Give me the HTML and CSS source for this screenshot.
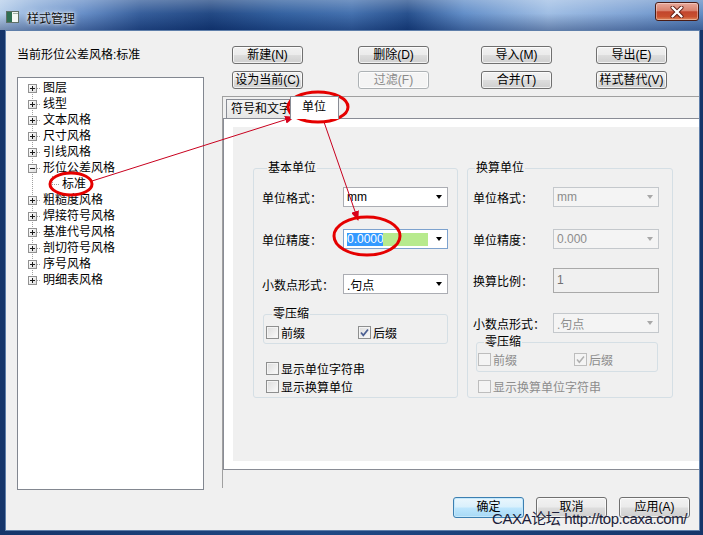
FILE: index.html
```html
<!DOCTYPE html>
<html lang="zh-CN">
<head>
    <meta charset="UTF-8">
    <title>样式管理</title>
    <link rel="stylesheet" href="styles.css">
</head>
<body>
<div class="window">
    <div class="titlebar">
        <svg class="app-icon" width="13" height="12" viewBox="0 0 13 12">
            <rect x="0.5" y="0.5" width="12" height="11" fill="#f4f7f4" stroke="#5f6f66"/>
            <rect x="1" y="1" width="5" height="10" fill="#2f6f52"/>
            <rect x="7" y="2" width="5" height="1" fill="#9fb0a6"/>
        </svg>
        <span class="title">样式管理</span>
        <button class="close" type="button">
            <svg width="14" height="12" viewBox="0 0 14 12">
                <path d="M2.5 1.5 L11.5 10.5 M11.5 1.5 L2.5 10.5" stroke="#5a1a10" stroke-width="4" stroke-linecap="round"/>
                <path d="M2.5 1.5 L11.5 10.5 M11.5 1.5 L2.5 10.5" stroke="#fff" stroke-width="2.4" stroke-linecap="round"/>
            </svg>
        </button>
    </div>

    <div class="client">
        <div class="main">
            <div class="left">
                <div class="current">当前形位公差风格:标准</div>
                <ul class="tree">
                    <li><span class="pm plus"></span><span class="dash"></span>图层</li>
                    <li><span class="pm plus"></span><span class="dash"></span>线型</li>
                    <li><span class="pm plus"></span><span class="dash"></span>文本风格</li>
                    <li><span class="pm plus"></span><span class="dash"></span>尺寸风格</li>
                    <li><span class="pm plus"></span><span class="dash"></span>引线风格</li>
                    <li><span class="pm"></span><span class="dash"></span>形位公差风格</li>
                    <li class="child"><span class="dash"></span>标准</li>
                    <li><span class="pm plus"></span><span class="dash"></span>粗糙度风格</li>
                    <li><span class="pm plus"></span><span class="dash"></span>焊接符号风格</li>
                    <li><span class="pm plus"></span><span class="dash"></span>基准代号风格</li>
                    <li><span class="pm plus"></span><span class="dash"></span>剖切符号风格</li>
                    <li><span class="pm plus"></span><span class="dash"></span>序号风格</li>
                    <li><span class="pm plus"></span><span class="dash"></span>明细表风格</li>
                </ul>
            </div>

            <div class="right">
                <div class="toolbar">
                    <button class="btn" type="button">新建(N)</button>
                    <button class="btn" type="button">删除(D)</button>
                    <button class="btn" type="button">导入(M)</button>
                    <button class="btn" type="button">导出(E)</button>
                    <button class="btn" type="button">设为当前(C)</button>
                    <button class="btn" type="button" disabled>过滤(F)</button>
                    <button class="btn" type="button">合并(T)</button>
                    <button class="btn" type="button">样式替代(V)</button>
                </div>

                <div class="frame">
                    <div class="tabs">
                        <div class="tab">符号和文字</div>
                        <div class="tab on">单位</div>
                    </div>
                    <div class="panel">
                        <div class="page">
                            <fieldset class="group basic">
                                <legend>基本单位</legend>
                                <div class="row r1"><label>单位格式：</label><div class="combo">mm</div></div>
                                <div class="row r2"><label>单位精度：</label><div class="combo focus"><span class="sel">0.0000</span><span class="hl"></span></div></div>
                                <div class="row r3"><label>小数点形式：</label><div class="combo">.句点</div></div>
                                <fieldset class="sub">
                                    <legend>零压缩</legend>
                                    <div class="cbrow">
                                        <span class="check"><span class="cb"></span>前缀</span>
                                        <span class="check"><span class="cb"><svg width="11" height="11" viewBox="0 0 11 11"><path d="M2 5.5 L4.3 8.3 L9 2.5" fill="none" stroke="#4b5f92" stroke-width="1.7"/></svg></span>后缀</span>
                                    </div>
                                </fieldset>
                                <div class="cbrow solo first"><span class="check"><span class="cb"></span>显示单位字符串</span></div>
                                <div class="cbrow solo"><span class="check"><span class="cb"></span>显示换算单位</span></div>
                            </fieldset>

                            <fieldset class="group alt">
                                <legend>换算单位</legend>
                                <div class="row r1"><label>单位格式：</label><div class="combo off">mm</div></div>
                                <div class="row r2"><label>单位精度：</label><div class="combo off">0.000</div></div>
                                <div class="row r3"><label>换算比例：</label><div class="textbox">1</div></div>
                                <div class="row r4"><label>小数点形式：</label><div class="combo off">.句点</div></div>
                                <fieldset class="sub">
                                    <legend>零压缩</legend>
                                    <div class="cbrow off">
                                        <span class="check"><span class="cb"></span>前缀</span>
                                        <span class="check"><span class="cb"><svg width="11" height="11" viewBox="0 0 11 11"><path d="M2 5.5 L4.3 8.3 L9 2.5" fill="none" stroke="#b0b0b0" stroke-width="1.5"/></svg></span>后缀</span>
                                    </div>
                                </fieldset>
                                <div class="cbrow solo off"><span class="check"><span class="cb"></span>显示换算单位字符串</span></div>
                            </fieldset>
                        </div>
                    </div>
                </div>
            </div>
        </div>

        <div class="actions">
            <button class="btn big default" type="button">确定</button>
            <button class="btn big" type="button">取消</button>
            <button class="btn big" type="button">应用(A)</button>
        </div>
    </div>

    <!-- red marks drawn on top of the screenshot -->
    <svg class="marks" width="703" height="535" viewBox="0 0 703 535">
        <defs>
            <marker id="arrow" markerWidth="10" markerHeight="8" refX="9" refY="4" orient="auto" markerUnits="userSpaceOnUse">
                <path d="M0 0 L10 4 L0 8 Z" fill="#d8001a"/>
            </marker>
        </defs>
        <line x1="92" y1="181" x2="294" y2="117" stroke="#c8001e" stroke-width="1" marker-end="url(#arrow)"/>
        <line x1="324" y1="122" x2="358" y2="220" stroke="#c8001e" stroke-width="1" marker-end="url(#arrow)"/>
        <ellipse cx="318" cy="107" rx="30" ry="15" fill="none" stroke="#e50000" stroke-width="3"/>
        <ellipse cx="71" cy="184" rx="21" ry="11" fill="none" stroke="#e50000" stroke-width="3"/>
        <ellipse cx="367" cy="236" rx="33" ry="19" fill="none" stroke="#e50000" stroke-width="3"/>
    </svg>

    <div class="watermark">CAXA论坛 http://top.caxa.com/</div>
</div>
</body>
</html>
```

FILE: styles.css
```css
* {
    box-sizing: border-box;
}

body {
    margin: 0;
    background: #17376a;
    font-family: "Liberation Sans", "Noto Sans CJK SC", sans-serif;
    font-size: 12px;
    color: #000;
}

.window {
    position: relative;
    width: 703px;
    height: 535px;
    display: flex;
    flex-direction: column;
    overflow: hidden;
    background: linear-gradient(to right, #15356a, #1f4884 45%, #15356a);
}

/* title bar */
.titlebar {
    height: 30px;
    display: flex;
    align-items: center;
    padding-left: 6px;
    background:
        linear-gradient(to bottom, rgba(255,255,255,0.28), rgba(255,255,255,0.05) 45%, rgba(0,20,70,0.35)),
        linear-gradient(to right, #b4cdea 0%, #8aacd9 5%, #5f88c4 12%, #2c5696 20%, #18407e 30%, #2a5a9c 40%, #3b6aab 50%, #1d4888 58%, #5b89c6 66%, #9bbbe3 78%, #7ea3d5 88%, #5a86c1 100%);
}

.app-icon {
    margin-top: 4px;
}

.title {
    margin-left: 8px;
    margin-top: 4px;
    font-size: 12px;
    color: #111;
    text-shadow: 0 0 6px #fff, 0 0 3px #fff;
}

.close {
    margin-left: auto;
    margin-right: 4px;
    align-self: flex-start;
    margin-top: 2px;
    width: 44px;
    height: 19px;
    padding: 0;
    border: 1px solid #4a1c14;
    border-radius: 3px;
    display: flex;
    align-items: center;
    justify-content: center;
    background: linear-gradient(to bottom, #e9a99b 0%, #d9826d 45%, #c2452c 52%, #c9502f 80%, #e08a5c 100%);
    box-shadow: inset 0 0 0 1px rgba(255,255,255,0.35);
}

/* dialog body */
.client {
    flex: 1;
    margin: 0 3px 4px 5px;
    border: 1px solid #5f7faa;
    background: #f0f0f0;
    display: flex;
    flex-direction: column;
}

.main {
    display: flex;
}

.left {
    padding: 16px 0 0 11px;
}

.current {
    height: 16px;
    line-height: 16px;
    white-space: nowrap;
}

.tree {
    list-style: none;
    margin: 14px 0 0;
    padding: 2px 0 0 10px;
    width: 187px;
    height: 413px;
    background: #fff;
    border: 1px solid #828790;
}

.tree li {
    display: flex;
    align-items: center;
    height: 16px;
    line-height: 16px;
    white-space: nowrap;
    background: repeating-linear-gradient(to bottom, #a0a0a0 0 1px, transparent 1px 2px) 4px 0 / 1px 100% no-repeat;
}

.tree li:first-child {
    background-position: 4px 8px;
    background-size: 1px 8px;
}

.tree li:last-child {
    background-size: 1px 8px;
}

.pm {
    width: 9px;
    height: 9px;
    border: 1px solid #919191;
    background:
        linear-gradient(#1a1a1a, #1a1a1a) center / 5px 1px no-repeat,
        linear-gradient(to bottom right, #ffffff, #dcdcdc);
}

.pm.plus {
    background:
        linear-gradient(#1a1a1a, #1a1a1a) center / 5px 1px no-repeat,
        linear-gradient(#1a1a1a, #1a1a1a) center / 1px 5px no-repeat,
        linear-gradient(to bottom right, #ffffff, #dcdcdc);
}

.dash {
    width: 4px;
    height: 1px;
    margin-right: 2px;
    background: repeating-linear-gradient(to right, #a0a0a0 0 1px, transparent 1px 2px);
}

.tree li.child {
    background:
        repeating-linear-gradient(to bottom, #a0a0a0 0 1px, transparent 1px 2px) 4px 0 / 1px 100% no-repeat,
        repeating-linear-gradient(to bottom, #a0a0a0 0 1px, transparent 1px 2px) 24px 0 / 1px 8px no-repeat;
}

.tree li.child .dash {
    width: 8px;
    margin-left: 24px;
}

/* right side */
.right {
    width: 477px;
    margin-left: 18px;
    padding-top: 15px;
}

.toolbar {
    display: grid;
    grid-template-columns: 126px 123px 115px 71px;
    row-gap: 7px;
    padding-left: 10px;
}

.btn {
    width: 71px;
    height: 18px;
    padding: 0;
    font-family: inherit;
    font-size: 12px;
    line-height: 16px;
    color: #000;
    border: 1px solid #707070;
    border-radius: 3px;
    background: linear-gradient(to bottom, #f2f2f2 0%, #ebebeb 48%, #dddddd 52%, #cfcfcf 100%);
    box-shadow: inset 0 0 0 1px rgba(255,255,255,0.7);
}

.btn:disabled {
    color: #8a8a8a;
    border-color: #adb2b5;
    background: #f4f4f4;
}

.frame {
    margin-top: 7px;
    height: 392px;
    border-top: 1px solid #a0a0a0;
    border-left: 1px solid #a0a0a0;
}

.tabs {
    display: flex;
    align-items: flex-end;
    height: 21px;
    padding-left: 3px;
}

.tab {
    height: 19px;
    line-height: 18px;
    padding: 0 4px;
    border: 1px solid #898c95;
    border-bottom: none;
    background: linear-gradient(to bottom, #f4f4f4, #e6e6e6);
    white-space: nowrap;
    width: 66px;
    overflow: hidden;
}

.tab.on {
    position: relative;
    z-index: 1;
    width: 49px;
    height: 23px;
    margin-left: -2px;
    margin-bottom: -1px;
    padding-left: 11px;
    line-height: 20px;
    background: #fff;
}

.panel {
    height: 352px;
    border-top: 1px solid #898c95;
    border-bottom: 1px solid #898c95;
    border-left: 1px solid #898c95;
    background: #fff;
    padding: 8px 0 8px 9px;
}

.page {
    height: 100%;
    background: #f0f0f0;
    display: flex;
    align-items: flex-start;
    padding: 34px 0 0 20px;
}

fieldset {
    margin: 0;
    min-width: 0;
    border: 1px solid #d5dfe5;
    border-radius: 3px;
}

legend {
    padding: 0 1px;
    line-height: 14px;
}

.group {
    height: 237px;
    padding: 0 0 3px 8px;
}

.group legend {
    margin-left: 5px;
}

.basic {
    width: 205px;
    margin-right: 9px;
}

.alt {
    width: 206px;
    padding-left: 5px;
}

.alt legend {
    margin-left: 2px;
}

.row {
    display: flex;
    align-items: center;
    height: 20px;
    white-space: nowrap;
}

.basic label {
    width: 81px;
}

.alt label {
    width: 80px;
}

.basic .r1, .alt .r1 {
    margin-top: 12px;
}

.basic .r2, .alt .r2 {
    margin-top: 22px;
}

.basic .r3 {
    margin-top: 25px;
}

.alt .r3 {
    margin-top: 19px;
    height: 25px;
}

.alt .r4 {
    margin-top: 20px;
}

.combo {
    display: flex;
    align-items: center;
    width: 105px;
    height: 20px;
    padding-left: 3px;
    border: 1px solid #abadb3;
    background: #fff;
}

.combo::after {
    content: "";
    margin-left: auto;
    margin-right: 5px;
    border-left: 3.5px solid transparent;
    border-right: 3.5px solid transparent;
    border-top: 4px solid #000;
}

.combo.focus {
    border-color: #7da2ce;
}

.sel {
    height: 13px;
    line-height: 13px;
    width: 36px;
    background: #3399ff;
    color: #fff;
}

.hl {
    width: 45px;
    height: 13px;
    background: #b7ea8d;
}

.combo.off {
    width: 106px;
    color: #8c8c8c;
    border-color: #c4c8cc;
    background: #f4f4f4;
}

.combo.off::after {
    border-top-color: #a8a8a8;
}

.textbox {
    width: 106px;
    height: 25px;
    line-height: 23px;
    padding-left: 3px;
    border: 1px solid #a9a9a9;
    background: #f0f0f0;
    color: #707070;
}

.sub {
    height: 37px;
}

.basic .sub {
    width: 185px;
    margin: 13px 0 0 1px;
    padding: 0 0 3px 2px;
}

.alt .sub {
    width: 182px;
    margin: 2px 0 0 3px;
    padding: 0 0 4px 1px;
}

.sub legend {
    margin-left: 6px;
}

.cbrow {
    display: flex;
    align-items: center;
    height: 16px;
    white-space: nowrap;
}

.basic .sub .cbrow {
    margin-top: 3px;
}

.alt .sub .cbrow {
    margin-top: 2px;
}

.basic .sub .check:first-child {
    width: 92px;
}

.alt .sub .check:first-child {
    width: 96px;
}

.check {
    display: flex;
    align-items: center;
}

.cb {
    width: 13px;
    height: 13px;
    margin-right: 2px;
    border: 1px solid #8e8f8f;
    background: linear-gradient(to bottom right, #dcdcdc, #fbfbfb);
    box-shadow: inset 0 0 0 1px #f4f4f4;
    display: flex;
    align-items: center;
    justify-content: center;
}

.off .cb {
    border-color: #bdbdbd;
    background: #f4f4f4;
}

.cbrow.off {
    color: #8d8d8d;
}

.basic .solo {
    margin-left: 4px;
}

.basic .solo.first {
    margin-top: 16px;
}

.basic .solo + .solo {
    margin-top: 2px;
}

.alt .solo {
    margin-left: 5px;
    margin-top: 6px;
}

/* bottom buttons */
.actions {
    display: flex;
    justify-content: flex-end;
    gap: 12px;
    margin-top: 7px;
    padding-right: 9px;
}

.btn.big {
    height: 21px;
    line-height: 19px;
}

.btn.default {
    border-color: #3c7fb1;
    background: linear-gradient(to bottom, #eaf6fd 0%, #d9f0fc 48%, #bee6fd 52%, #a7d9f5 100%);
    box-shadow: inset 0 0 0 1px #c5e8fb;
}

/* overlays */
.marks {
    position: absolute;
    left: 0;
    top: 0;
    pointer-events: none;
}

.watermark {
    position: absolute;
    left: 492px;
    top: 511px;
    font-size: 15px;
    line-height: 16px;
    letter-spacing: -0.4px;
    color: #1b1d3a;
    white-space: nowrap;
}
```
